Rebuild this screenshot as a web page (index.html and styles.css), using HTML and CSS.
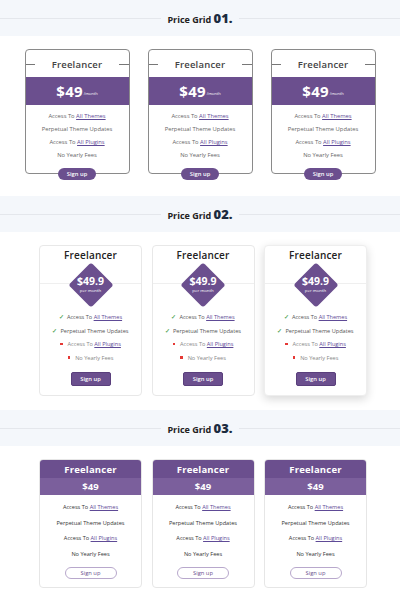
FILE: index.html
```html
<!DOCTYPE html>
<html>
<head>
<meta charset="utf-8">
<link rel="stylesheet" href="styles.css">
</head>
<body>
<section class="sec sec1">
  <div class="head"><h2><span class="pg">Price Grid</span> <span class="num">01.</span></h2></div>
  <div class="grid g1">
    <div class="card c1">
      <div class="c1-title"><span>Freelancer</span></div>
      <div class="c1-price"><span class="amt">$49</span><span class="per">/month</span></div>
      <ul class="feat f1">
        <li>Access To <a href="#">All Themes</a></li>
        <li>Perpetual Theme Updates</li>
        <li>Access To <a href="#">All Plugins</a></li>
        <li>No Yearly Fees</li>
      </ul>
      <a class="btn1" href="#">Sign up</a>
    </div>
    <div class="card c1">
      <div class="c1-title"><span>Freelancer</span></div>
      <div class="c1-price"><span class="amt">$49</span><span class="per">/month</span></div>
      <ul class="feat f1">
        <li>Access To <a href="#">All Themes</a></li>
        <li>Perpetual Theme Updates</li>
        <li>Access To <a href="#">All Plugins</a></li>
        <li>No Yearly Fees</li>
      </ul>
      <a class="btn1" href="#">Sign up</a>
    </div>
    <div class="card c1">
      <div class="c1-title"><span>Freelancer</span></div>
      <div class="c1-price"><span class="amt">$49</span><span class="per">/month</span></div>
      <ul class="feat f1">
        <li>Access To <a href="#">All Themes</a></li>
        <li>Perpetual Theme Updates</li>
        <li>Access To <a href="#">All Plugins</a></li>
        <li>No Yearly Fees</li>
      </ul>
      <a class="btn1" href="#">Sign up</a>
    </div>
  </div>
</section>

<section class="sec sec2">
  <div class="head"><h2><span class="pg">Price Grid</span> <span class="num">02.</span></h2></div>
  <div class="grid g2">
    <div class="card c2">
      <div class="c2-title">Freelancer</div>
      <div class="c2-pricewrap">
        <div class="diamond"><span class="d-amt">$49.9</span><span class="d-per">per month</span></div>
      </div>
      <ul class="feat f2">
        <li><span class="ok">✓</span>Access To <a href="#">All Themes</a></li>
        <li><span class="ok">✓</span>Perpetual Theme Updates</li>
        <li class="off"><span class="no"></span>Access To <a href="#">All Plugins</a></li>
        <li class="off"><span class="no"></span>No Yearly Fees</li>
      </ul>
      <a class="btn2" href="#">Sign up</a>
    </div>
    <div class="card c2">
      <div class="c2-title">Freelancer</div>
      <div class="c2-pricewrap">
        <div class="diamond"><span class="d-amt">$49.9</span><span class="d-per">per month</span></div>
      </div>
      <ul class="feat f2">
        <li><span class="ok">✓</span>Access To <a href="#">All Themes</a></li>
        <li><span class="ok">✓</span>Perpetual Theme Updates</li>
        <li class="off"><span class="no"></span>Access To <a href="#">All Plugins</a></li>
        <li class="off"><span class="no"></span>No Yearly Fees</li>
      </ul>
      <a class="btn2" href="#">Sign up</a>
    </div>
    <div class="card c2 hover">
      <div class="c2-title">Freelancer</div>
      <div class="c2-pricewrap">
        <div class="diamond"><span class="d-amt">$49.9</span><span class="d-per">per month</span></div>
      </div>
      <ul class="feat f2">
        <li><span class="ok">✓</span>Access To <a href="#">All Themes</a></li>
        <li><span class="ok">✓</span>Perpetual Theme Updates</li>
        <li class="off"><span class="no"></span>Access To <a href="#">All Plugins</a></li>
        <li class="off"><span class="no"></span>No Yearly Fees</li>
      </ul>
      <a class="btn2" href="#">Sign up</a>
    </div>
  </div>
</section>

<section class="sec sec3">
  <div class="head"><h2><span class="pg">Price Grid</span> <span class="num">03.</span></h2></div>
  <div class="grid g3">
    <div class="card c3">
      <div class="c3-title">Freelancer</div>
      <div class="c3-price">$49</div>
      <ul class="feat f3">
        <li>Access To <a href="#">All Themes</a></li>
        <li>Perpetual Theme Updates</li>
        <li>Access To <a href="#">All Plugins</a></li>
        <li>No Yearly Fees</li>
      </ul>
      <a class="btn3" href="#">Sign up</a>
    </div>
    <div class="card c3">
      <div class="c3-title">Freelancer</div>
      <div class="c3-price">$49</div>
      <ul class="feat f3">
        <li>Access To <a href="#">All Themes</a></li>
        <li>Perpetual Theme Updates</li>
        <li>Access To <a href="#">All Plugins</a></li>
        <li>No Yearly Fees</li>
      </ul>
      <a class="btn3" href="#">Sign up</a>
    </div>
    <div class="card c3">
      <div class="c3-title">Freelancer</div>
      <div class="c3-price">$49</div>
      <ul class="feat f3">
        <li>Access To <a href="#">All Themes</a></li>
        <li>Perpetual Theme Updates</li>
        <li>Access To <a href="#">All Plugins</a></li>
        <li>No Yearly Fees</li>
      </ul>
      <a class="btn3" href="#">Sign up</a>
    </div>
  </div>
</section>
</body>
</html>
```

FILE: styles.css
```css
* { box-sizing: border-box; }
html, body { margin: 0; padding: 0; background: #fff; }
body {
  font-family: "Open Sans", "Noto Sans", sans-serif;
  color: #444;
  width: 400px;
  overflow: hidden;
}
a { color: #5e4a96; }

.head {
  height: 36px;
  background: #f4f7fb;
  display: flex;
  align-items: center;
}
.head::before, .head::after {
  content: "";
  flex: 1;
  height: 1px;
  background: #e4e7ec;
}
.head h2 {
  margin: 0;
  padding: 0 6px;
  font-size: 9px;
  font-weight: 700;
  color: #222;
  line-height: 1;
  white-space: nowrap;
}
.head .num { font-size: 13px; font-weight: 800; color: #1c2b3f; }

.grid { display: flex; }
.feat { list-style: none; margin: 0; padding: 0; text-align: center; }
.feat a { text-decoration: underline; }

/* Grid 1 */
.g1 { justify-content: center; gap: 18px; margin-top: 13px; margin-bottom: 22px; }
.c1 {
  width: 105px;
  height: 125px;
  border: 1px solid #8a8a8a;
  border-radius: 4px;
  display: flex;
  flex-direction: column;
  align-items: stretch;
}
.c1-title {
  height: 27px;
  display: flex;
  align-items: center;
  font-size: 9.5px;
  font-weight: 600;
  color: #444;
  letter-spacing: 0.2px;
  padding-top: 1px;
}
.c1-title::before, .c1-title::after {
  content: "";
  flex: 1;
  height: 1px;
  background: #777;
}
.c1-title span { padding: 0 17px; }
.c1-price {
  height: 28px;
  background: #6b4f8e;
  color: #fff;
  display: flex;
  align-items: center;
  justify-content: center;
}
.c1-price .amt { font-size: 15px; font-weight: 700; letter-spacing: 0.2px; }
.c1-price .per { font-size: 4px; margin-top: 4px; margin-left: 1px; }
.f1 { padding-top: 5px; font-size: 5.8px; color: #666; }
.f1 li { line-height: 13px; }
.btn1 {
  align-self: center;
  margin-top: auto;
  margin-bottom: -7px;
  width: 38px;
  height: 12px;
  border-radius: 6px;
  background: #6b4f8e;
  color: #fff;
  text-decoration: none;
  font-size: 5.8px;
  font-weight: 600;
  display: flex;
  align-items: center;
  justify-content: center;
}

/* Grid 2 */
.g2 { padding-left: 39px; gap: 9.5px; margin-top: 13px; margin-bottom: 14px; }
.c2 {
  width: 103px;
  height: 151px;
  border: 1px solid #e8e8e8;
  border-radius: 4px;
  background: #fff;
  display: flex;
  flex-direction: column;
  align-items: center;
}
.c2.hover { box-shadow: 0 3px 10px rgba(0, 0, 0, 0.16); border-color: #eee; }
.c2-title {
  margin-top: 2px;
  line-height: 14px;
  font-size: 10px;
  font-weight: 600;
  letter-spacing: 0.2px;
  color: #222;
}
.c2-pricewrap {
  align-self: stretch;
  display: flex;
  justify-content: center;
  background: linear-gradient(#efefef, #efefef) 0 21px / 100% 1px no-repeat;
}
.diamond {
  position: relative;
  width: 46px;
  height: 46px;
  display: flex;
  flex-direction: column;
  align-items: center;
  justify-content: center;
  color: #fff;
}
.diamond::before {
  content: "";
  position: absolute;
  left: 7px; top: 7px;
  width: 32px; height: 32px;
  background: #6b4f8e;
  border-radius: 3px;
  transform: rotate(45deg);
}
.d-amt { position: relative; font-size: 10.5px; font-weight: 700; line-height: 11px; margin-top: -2px; }
.d-per { position: relative; font-size: 4.3px; line-height: 6px; }
.f2 { padding-top: 3px; font-size: 5.6px; color: #555; }
.f2 li { line-height: 13.5px; }
.f2 li.off { color: #888; }
.f2 .ok { color: #5aa85a; font-size: 5.5px; font-weight: 700; margin-right: 3px; }
.f2 .no {
  display: inline-block;
  width: 2.5px; height: 2.5px;
  background: #e53935;
  margin-right: 5px;
  vertical-align: 1px;
}
.btn2 {
  margin-top: 7px;
  width: 40px;
  height: 14px;
  border-radius: 2px;
  background: #6b4f8e;
  border: 1px solid #5a3f7c;
  color: #fff;
  text-decoration: none;
  font-size: 5.8px;
  font-weight: 600;
  display: flex;
  align-items: center;
  justify-content: center;
}

/* Grid 3 */
.g3 { padding-left: 39px; gap: 9.5px; margin-top: 13px; }
.c3 {
  width: 103px;
  height: 129px;
  border: 1px solid #e6e6e6;
  border-radius: 4px;
  overflow: hidden;
  display: flex;
  flex-direction: column;
  align-items: stretch;
}
.c3-title {
  height: 18px;
  background: #6b4f8e;
  color: #fff;
  font-size: 9.5px;
  font-weight: 700;
  letter-spacing: 0.2px;
  display: flex;
  align-items: center;
  justify-content: center;
}
.c3-price {
  height: 17px;
  background: #7b5f9c;
  color: #fff;
  font-size: 9.5px;
  font-weight: 700;
  display: flex;
  align-items: center;
  justify-content: center;
}
.f3 { padding-top: 5px; font-size: 5.6px; color: #333; }
.f3 li { line-height: 15.5px; }
.btn3 {
  align-self: center;
  margin-top: 5px;
  width: 52px;
  height: 12px;
  border-radius: 6px;
  border: 1px solid #b8a8cc;
  color: #6b4f8e;
  text-decoration: none;
  font-size: 5.8px;
  display: flex;
  align-items: center;
  justify-content: center;
}
```
